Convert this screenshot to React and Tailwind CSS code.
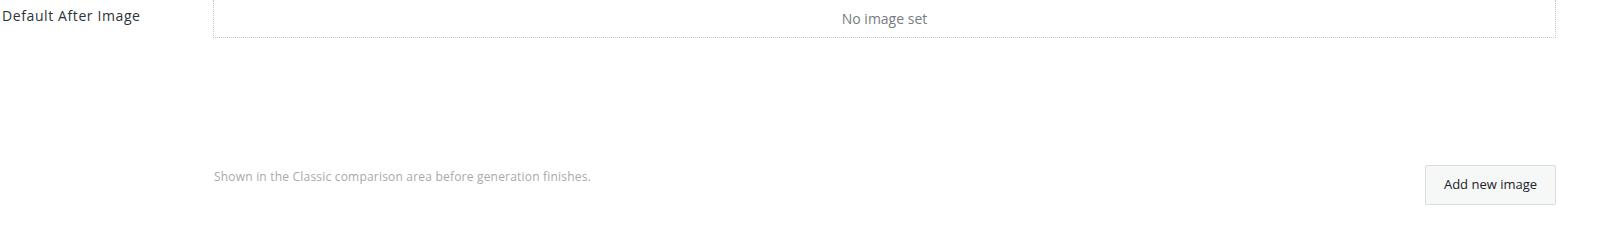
export default function App() {
  return (
    <div
      className="flex w-[1600px] h-[234px] bg-white"
      style={{ fontFamily: '"Open Sans", "Noto Sans", sans-serif' }}
    >
      <div className="w-[213px] shrink-0 pl-[2px] pt-[6px] text-[14px] leading-[20px] text-[#2c3338] tracking-[0.6px]">
        Default After Image
      </div>
      <div className="w-[1343px] flex flex-col">
        <div className="h-[38px] border border-t-0 border-dotted border-[#c3c4c7] flex items-center justify-center">
          <span className="text-[14px] text-[#787c82] -mt-[1px]">No image set</span>
        </div>
        <div className="mt-[127px] flex justify-between items-start">
          <p className="pt-[3px] pl-[1px] text-[12px] text-[#a7aaad] tracking-[0.2px]">
            Shown in the Classic comparison area before generation finishes.
          </p>
          <button className="h-[40px] w-[131px] border border-[#dcdcde] bg-[#f6f7f7] text-[13px] text-[#1d2327] rounded-[2px]">
            Add new image
          </button>
        </div>
      </div>
    </div>
  );
}
